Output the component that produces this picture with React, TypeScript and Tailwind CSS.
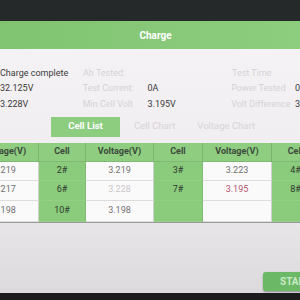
import React from "react";

const cols = [
  { t: "V", w: 68 },
  { t: "C", w: 47 },
  { t: "V", w: 68 },
  { t: "C", w: 49 },
  { t: "V", w: 69 },
  { t: "C", w: 48 },
];

type CellVal = { v: string; c?: string };
const rows: CellVal[][] = [
  [{ v: "3.219" }, { v: "2#" }, { v: "3.219" }, { v: "3#" }, { v: "3.223" }, { v: "4#" }],
  [{ v: "3.217" }, { v: "6#" }, { v: "3.228", c: "text-[#c9c6c9]" }, { v: "7#" }, { v: "3.195", c: "text-[#b2566c]" }, { v: "8#" }],
  [{ v: "3.198" }, { v: "10#" }, { v: "3.198" }, { v: "" }, { v: "" }, { v: "" }],
];
const rowH = ["h-[19px]", "h-[20px]", "h-[21px]"];

export default function App() {
  return (
    <div
      className="w-[300px] h-[300px] overflow-hidden flex flex-col bg-[#f2eff2]"
      style={{ fontFamily: "Roboto, 'Liberation Sans', sans-serif" }}
    >
      <div className="h-[21px] bg-[#25292a] shrink-0" />
      <div className="h-[28px] shrink-0 bg-gradient-to-r from-[#80c471] to-[#8dcd7e] flex items-center justify-center pl-[11px] text-white text-[10px] font-bold">
        Charge
      </div>
      <div className="flex-1 flex flex-col bg-gradient-to-b from-[#f5f2f5] via-[#efedef] to-[#dcdadd]">
        <div className="pt-[16.5px] text-[9px] leading-[15.5px]">
          {[
            ["Charge complete", "Ah Tested:", "", "Test Time", ""],
            ["32.125V", "Test Current:", "0A", "Power Tested", "0"],
            ["3.228V", "Min Cell Volt", "3.195V", "Volt Difference", "3"],
          ].map((r, i) => (
            <div key={i} className="flex h-[15.5px] whitespace-nowrap">
              <div className="w-[83px] text-[#3a3a3a]">{r[0]}</div>
              <div className="w-[65px] text-[#d6d1d6]">{r[1]}</div>
              <div className="w-[84px] text-[#3a3a3a]">{r[2]}</div>
              <div className="w-[64px] text-[#d6d1d6]">{r[3]}</div>
              <div className="text-[#3a3a3a]">{r[4]}</div>
            </div>
          ))}
        </div>
        <div className="mt-[4.5px] flex items-center h-[20px] text-[9.5px] whitespace-nowrap">
          <div className="ml-[51px] w-[69px] h-[20px] bg-[#8ccd7f] text-white font-bold flex items-center justify-center">
            Cell List
          </div>
          <div className="ml-[14px] text-[#d8d4d8]">Cell Chart</div>
          <div className="ml-[22px] text-[#d8d4d8]">Voltage Chart</div>
        </div>
        <div className="mt-[6px] ml-[-29px] flex flex-col border-b border-[#9a9a9a] w-[349px]">
          <div className="flex h-[19px] bg-[#8fcd80] text-[9px] font-bold text-[#3b4a3b] border-b border-[#7fb872]">
            {cols.map((c, i) => (
              <div
                key={i}
                style={{ width: c.w }}
                className="flex items-center justify-center border-r border-[#7db570] shrink-0"
              >
                {c.t === "V" ? "Voltage(V)" : "Cell"}
              </div>
            ))}
          </div>
          {rows.map((r, ri) => (
            <div key={ri} className={`flex ${rowH[ri]} text-[9px]`}>
              {r.map((cell, ci) => {
                const isCell = cols[ci].t === "C";
                return (
                  <div
                    key={ci}
                    style={{ width: cols[ci].w }}
                    className={
                      isCell
                        ? "shrink-0 flex items-center justify-center bg-[#8bcb7c] text-[#2f3a2f] border-r border-[#80bb73] border-b border-b-[#93d085]"
                        : `shrink-0 flex items-center justify-center bg-[#fbfafb] border-r border-[#d0d0d0] border-b border-b-[#dddddd] ${cell.c ?? "text-[#707070]"}`
                    }
                  >
                    {cell.v}
                  </div>
                );
              })}
            </div>
          ))}
        </div>
        <div className="flex-1" />
        <div className="pl-[263px] pb-[2px]">
          <div className="w-[70px] h-[19px] rounded-[3px] bg-[#6bb966] shadow-[0_1px_2px_rgba(0,0,0,0.35)] flex items-center pl-[17px] text-[10px] font-bold text-[#c9e8c4]">
            START
          </div>
        </div>
      </div>
      <div className="h-[7px] bg-[#1c1c1c] shrink-0" />
    </div>
  );
}
